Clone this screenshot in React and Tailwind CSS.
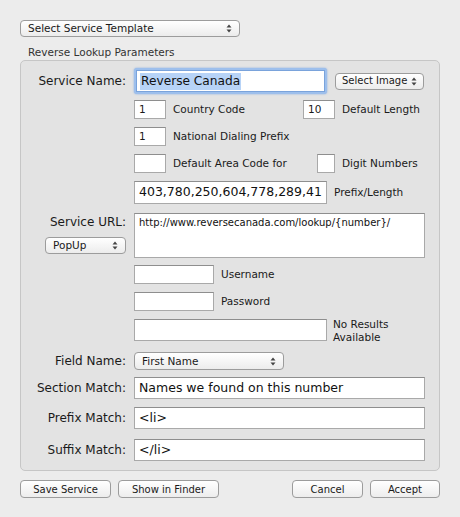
import React from "react";

const F = { fontFamily: '"DejaVu Sans", "Liberation Sans", sans-serif' };

function Arrows() {
  return (
    <svg width="6" height="9" viewBox="0 0 6 9" className="shrink-0">
      <path d="M3 0.5 L5.5 3.5 L0.5 3.5 Z" fill="#444" />
      <path d="M3 8.5 L5.5 5.5 L0.5 5.5 Z" fill="#444" />
    </svg>
  );
}

function Popup({ w, label, className = "", text = "text-[10.5px]" }) {
  return (
    <div
      className={`flex items-center justify-between h-[17px] rounded-[4px] border border-[#9c9c9c] bg-gradient-to-b from-[#ffffff] to-[#ececec] pl-[7px] pr-[7px] text-[#1a1a1a] whitespace-nowrap shrink-0 ${text} ${className}`}
      style={{ width: w }}
    >
      <span className="leading-none">{label}</span>
      <Arrows />
    </div>
  );
}

function Button({ w, label }) {
  return (
    <div
      className="flex items-center justify-center h-[18px] rounded-[4px] border border-[#9c9c9c] bg-gradient-to-b from-[#ffffff] to-[#ededed] text-[10px] text-[#1a1a1a] whitespace-nowrap"
      style={{ width: w }}
    >
      {label}
    </div>
  );
}

function Box({ w, h, children, className = "" }) {
  return (
    <div
      className={`bg-white border border-[#a9a9a9] border-t-[#8e8e8e] flex items-center pl-[4px] overflow-hidden whitespace-nowrap text-[#111] shrink-0 ${className}`}
      style={{ width: w, height: h }}
    >
      {children}
    </div>
  );
}

function Row({ label, children, className = "" }) {
  return (
    <div className={`flex items-center ${className}`}>
      <div className="w-[105px] text-right text-[12px] text-[#1a1a1a] shrink-0">{label}</div>
      <div className="ml-[8px] flex items-center">{children}</div>
    </div>
  );
}

function Small({ children, className = "" }) {
  return <span className={`text-[10.5px] text-[#1a1a1a] whitespace-nowrap ${className}`}>{children}</span>;
}

export default function App() {
  return (
    <div className="w-[460px] h-[517px] bg-[#ececec] pt-[20px] pl-[20px]" style={F}>
      <Popup w={220} label="Select Service Template" />
      <div className="ml-[8px] mt-[8px] h-[14px] leading-[14px] text-[10.5px] text-[#333]">Reverse Lookup Parameters</div>
      <div className="mt-[1px] w-[420px] h-[411px] rounded-[5px] border border-[#c6c6c6] bg-[#e3e3e3] pt-[7px]">
        <Row label="Service Name:">
          <div className="w-[193px] h-[26px] rounded-[3px] bg-[#9dbfec] p-[2px] shadow-[0_0_2px_#7fa8e2]">
            <div className="w-full h-full bg-white border border-[#7aa3db] flex items-center pl-[3px]">
              <span className="bg-[#b7d3f7] text-[12.2px] leading-[17px] text-[#111] px-[1px]">Reverse Canada</span>
            </div>
          </div>
          <Popup w={89} label="Select Image" className="ml-[8px] !pl-[6px] !pr-[6px]" text="text-[10px]" />
        </Row>

        <div className="flex items-center mt-[6px] ml-[113px]">
          <Box w={32} h={19}><Small>1</Small></Box>
          <Small className="ml-[7px] w-[130px]">Country Code</Small>
          <Box w={32} h={19}><Small>10</Small></Box>
          <Small className="ml-[7px]">Default Length</Small>
        </div>

        <div className="flex items-center mt-[8px] ml-[113px]">
          <Box w={32} h={19}><Small>1</Small></Box>
          <Small className="ml-[7px]">National Dialing Prefix</Small>
        </div>

        <div className="flex items-center mt-[8px] ml-[113px]">
          <Box w={32} h={19} />
          <Small className="ml-[7px] w-[144px]">Default Area Code for</Small>
          <Box w={18} h={19} />
          <Small className="ml-[7px]">Digit Numbers</Small>
        </div>

        <div className="flex items-center mt-[8px] ml-[113px]">
          <Box w={193} h={23}><span className="text-[12.5px]">403,780,250,604,778,289,41</span></Box>
          <Small className="ml-[7px]">Prefix/Length</Small>
        </div>

        <div className="flex mt-[9px]">
          <div className="w-[105px] flex flex-col items-end shrink-0">
            <div className="text-[12px] text-[#1a1a1a] leading-[16px] mt-[1px]">Service URL:</div>
            <Popup w={81} label="PopUp" className="mt-[7px]" />
          </div>
          <div className="ml-[8px] w-[291px] h-[45px] bg-white border border-[#a9a9a9] border-t-[#8e8e8e] pl-[4px] pt-[2px] text-[10px] leading-[14px] text-[#111]">
            http://www.reversecanada.com/lookup/{"{number}"}/
          </div>
        </div>

        <div className="flex items-center mt-[7px] ml-[113px]">
          <Box w={80} h={19} />
          <Small className="ml-[7px]">Username</Small>
        </div>
        <div className="flex items-center mt-[8px] ml-[113px]">
          <Box w={80} h={19} />
          <Small className="ml-[7px]">Password</Small>
        </div>
        <div className="flex items-start mt-[8px] ml-[113px] h-[26px]">
          <Box w={193} h={22} />
          <div className="ml-[6px] -mt-[1px] text-[10.5px] leading-[13px] text-[#1a1a1a]">No Results<br />Available</div>
        </div>

        <Row label="Field Name:" className="mt-[7px] h-[18px]">
          <Popup w={150} label="First Name" text="text-[10.5px]" className="h-[18px]" />
        </Row>
        <Row label="Section Match:" className="mt-[7px] h-[22px]">
          <Box w={291} h={22}><span className="text-[12.5px]">Names we found on this number</span></Box>
        </Row>
        <Row label="Prefix Match:" className="mt-[8px] h-[22px]">
          <Box w={291} h={22}><span className="text-[12.5px]">&lt;li&gt;</span></Box>
        </Row>
        <Row label="Suffix Match:" className="mt-[10px] h-[22px]">
          <Box w={291} h={22}><span className="text-[12.5px]">&lt;/li&gt;</span></Box>
        </Row>
      </div>

      <div className="flex items-center mt-[9px] w-[420px]">
        <Button w={91} label="Save Service" />
        <div className="ml-[7px]"><Button w={101} label="Show in Finder" /></div>
        <div className="ml-auto flex gap-[7px]">
          <Button w={71} label="Cancel" />
          <Button w={70} label="Accept" />
        </div>
      </div>
    </div>
  );
}
